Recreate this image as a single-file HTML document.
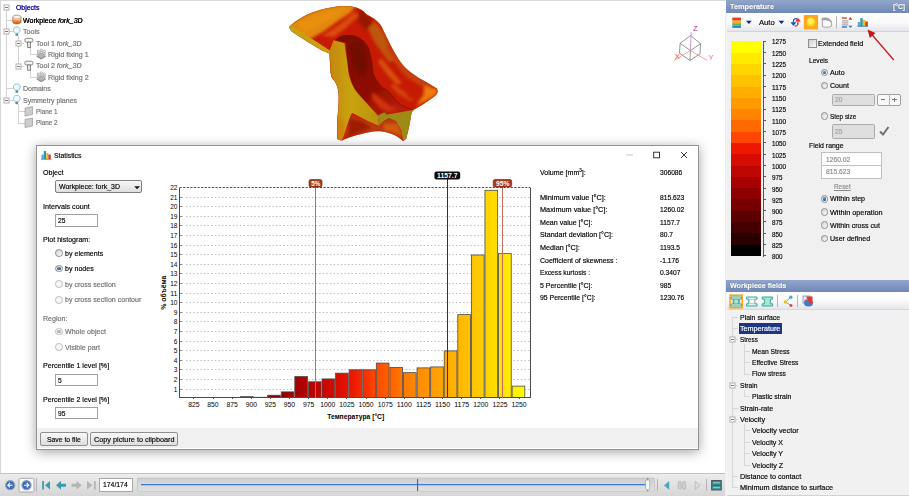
<!DOCTYPE html>
<html><head><meta charset="utf-8"><title>Statistics</title>
<style>
html,body{margin:0;padding:0;}
body{width:909px;height:496px;overflow:hidden;background:#fff;position:relative;font-family:"Liberation Sans","DejaVu Sans",sans-serif;font-size:8px;color:#000;}
.a{position:absolute;white-space:nowrap;}
.t{position:absolute;white-space:nowrap;transform-origin:0 50%;-webkit-text-stroke:.18px;}
.radio{position:absolute;width:5.7px;height:5.7px;border:1px solid #8e8e8e;border-radius:50%;background:linear-gradient(135deg,#cfcfcf,#fff);}
.radio.on::after{content:"";position:absolute;left:1px;top:1px;width:3.7px;height:3.7px;border-radius:50%;background:radial-gradient(circle at 40% 35%,#4aa4f0,#1a4a9c 75%);}
.radio.dis{border-color:#bdbdbd;background:#f6f6f6;}
.radio.dis.on::after{background:#b0b0b0;}
.inp{position:absolute;background:#fff;border:1px solid #a0a0a0;box-sizing:border-box;}
.btn{position:absolute;box-sizing:border-box;border:1px solid #8f8f8f;border-radius:2px;background:linear-gradient(#f8f8f8,#dedede);}
</style></head><body>

<div class="a" style="left:0;top:0;width:726px;height:1px;background:#dadada"></div>
<div class="a" style="left:0;top:0;width:1px;height:474px;background:#d6d6d6"></div>
<svg class="a" style="left:0;top:0" width="120" height="135" viewBox="0 0 120 135">
<g fill="none" stroke="#d2d2d2" stroke-width="1" shape-rendering="crispEdges">
<path d="M6.5 9V100.5 M6.5 20.5h6 M6.5 31.5h6 M6.5 88.5h6 M6.5 100.5h6 M18.5 35.8V66.5 M18.5 43.5h5 M18.5 66.5h5 M30.5 47.2V54.5h6 M30.5 70V77.5h6 M18.5 104.19999999999999V123.5 M18.5 111.5h6 M18.5 123.5h6"/></g>
<g fill="#fff" stroke="#b0b0b0">
<rect x="4" y="5" width="5" height="5"/>
<rect x="4" y="29" width="5" height="5"/>
<rect x="16" y="41" width="5" height="5"/>
<rect x="16" y="64" width="5" height="5"/>
<rect x="4" y="98" width="5" height="5"/>
</g><g stroke="#6a78b0" shape-rendering="crispEdges">
<path d="M5 7.5h3"/>
<path d="M5 31.5h3"/>
<path d="M17 43.5h3"/>
<path d="M17 66.5h3"/>
<path d="M5 100.5h3"/>
</g>
<defs><linearGradient id="wp" x1="0" y1="0" x2="0" y2="1"><stop offset="0" stop-color="#ffffff"/><stop offset=".4" stop-color="#fbd6b8"/><stop offset=".75" stop-color="#ec7a2a"/><stop offset="1" stop-color="#d85808"/></linearGradient></defs>
<path d="M12.8 17c0-2.4 8.2-2.4 8.2 0v5c0 2.5-8.2 2.5-8.2 0z" fill="url(#wp)" stroke="#a85a2a" stroke-width=".7"/><ellipse cx="16.9" cy="17" rx="3.8" ry="1.4" fill="#fff" stroke="#b87a5a" stroke-width=".4"/>
<path d="M15.3 33.3c-3.4-2.6-1.8-6.4 1.5-6.4s4.9 3.8 1.5 6.4z" fill="#eef8fc" stroke="#5ab0c8" stroke-width=".7"/><rect x="15.5" y="33.6" width="2.6" height="2.2" fill="#5a8a9a"/>
<path d="M15.3 90.3c-3.4-2.6-1.8-6.4 1.5-6.4s4.9 3.8 1.5 6.4z" fill="#eef8fc" stroke="#5ab0c8" stroke-width=".7"/><rect x="15.5" y="90.6" width="2.6" height="2.2" fill="#5a8a9a"/>
<path d="M15.3 101.7c-3.4-2.6-1.8-6.4 1.5-6.4s4.9 3.8 1.5 6.4z" fill="#eef8fc" stroke="#5ab0c8" stroke-width=".7"/><rect x="15.5" y="102" width="2.6" height="2.2" fill="#5a8a9a"/>
<rect x="24.8" y="38.4" width="8.2" height="3.8" rx="1.7" fill="#f4f4f4" stroke="#707070" stroke-width=".8"/><rect x="27.6" y="42.2" width="3" height="5.2" fill="#e8e8e8" stroke="#707070" stroke-width=".8"/>
<rect x="24.8" y="61.2" width="8.2" height="3.8" rx="1.7" fill="#f4f4f4" stroke="#707070" stroke-width=".8"/><rect x="27.6" y="65" width="3" height="5.2" fill="#e8e8e8" stroke="#707070" stroke-width=".8"/>
<path d="M36.2 56.4l5-2.6 5 2.6-5 3z" fill="#8c8c8c"/><path d="M36.2 55.2l5-2.6 5 2.6-5 3z" fill="#b4b4b4"/><g fill="#fff" stroke="#7a7a7a" stroke-width=".5"><circle cx="38.3" cy="51.1" r="1.1"/><circle cx="41.3" cy="50.1" r="1.1"/><circle cx="44.3" cy="51.1" r="1.1"/><path d="M37.3 54.1v-1.6h2v1.6zM40.3 53.3v-1.8h2v1.8zM43.3 54.1v-1.6h2v1.6z"/></g>
<path d="M36.2 79.2l5-2.6 5 2.6-5 3z" fill="#8c8c8c"/><path d="M36.2 78l5-2.6 5 2.6-5 3z" fill="#b4b4b4"/><g fill="#fff" stroke="#7a7a7a" stroke-width=".5"><circle cx="38.3" cy="73.9" r="1.1"/><circle cx="41.3" cy="72.9" r="1.1"/><circle cx="44.3" cy="73.9" r="1.1"/><path d="M37.3 76.9v-1.6h2v1.6zM40.3 76.1v-1.8h2v1.8zM43.3 76.9v-1.6h2v1.6z"/></g>
<path d="M25 108.1l7.5-1.5v8l-7.5 1.5z" fill="#cdcdcd" stroke="#8e8e8e" stroke-width=".6"/>
<path d="M25 119.5l7.5-1.5v8l-7.5 1.5z" fill="#cdcdcd" stroke="#8e8e8e" stroke-width=".6"/>
</svg>
<div class="t" style="top:2.7px;font-size:8px;line-height:9px;transform:scaleX(0.863);left:15.7px;color:#2a20a8;text-shadow:0 0 .2px #2a20a8;">Objects</div>
<div class="t" style="top:15.8px;font-size:8px;line-height:9px;transform:scaleX(0.878);left:23.2px;color:#000;text-shadow:0 0 .2px #444;">Workpiece <i>fork_3D</i></div>
<div class="t" style="top:27.2px;font-size:8px;line-height:9px;transform:scaleX(0.894);left:23.2px;color:#707070;">Tools</div>
<div class="t" style="top:38.6px;font-size:8px;line-height:9px;transform:scaleX(0.882);left:35.5px;color:#707070;">Tool 1 <i>fork_3D</i></div>
<div class="t" style="top:50px;font-size:8px;line-height:9px;transform:scaleX(0.888);left:48.3px;color:#707070;">Rigid fixing 1</div>
<div class="t" style="top:61.4px;font-size:8px;line-height:9px;transform:scaleX(0.882);left:35.5px;color:#707070;">Tool 2 <i>fork_3D</i></div>
<div class="t" style="top:72.8px;font-size:8px;line-height:9px;transform:scaleX(0.888);left:48.3px;color:#707070;">Rigid fixing 2</div>
<div class="t" style="top:84.2px;font-size:8px;line-height:9px;transform:scaleX(0.881);left:23.2px;color:#707070;">Domains</div>
<div class="t" style="top:95.6px;font-size:8px;line-height:9px;transform:scaleX(0.874);left:23.2px;color:#707070;">Symmetry planes</div>
<div class="t" style="top:107px;font-size:8px;line-height:9px;transform:scaleX(0.792);left:35.5px;color:#707070;">Plane 1</div>
<div class="t" style="top:118.4px;font-size:8px;line-height:9px;transform:scaleX(0.792);left:35.5px;color:#707070;">Plane 2</div>
<svg class="a" style="left:280px;top:0" width="170" height="146" viewBox="280 0 170 146">
<defs>
<clipPath id="oc"><path d="M289 27C289 27 293.1 22.9 296.5 20.7C299.9 18.5 304.9 15.7 309.1 13.8C313.3 11.9 317.4 10.6 321.6 9.4C325.8 8.2 330.4 7.5 334.2 6.9C338 6.3 340.8 5.9 344.2 5.9C347.6 5.9 351.4 6.2 354.3 6.9C357.2 7.6 359.7 8.8 361.8 10C363.9 11.2 364.7 12.9 366.8 14.4C368.9 15.9 372 17 374.3 18.8C376.6 20.6 378.9 22.8 380.6 25.1C382.3 27.4 382.9 29.7 384.4 32.6C385.9 35.5 387.7 39.4 389.4 42.7C391.1 46.1 392.4 48.9 394.7 52.7C397 56.5 399.7 61.5 403.2 65.4C406.7 69.3 411.7 73 415.9 76C420.1 79 425.1 81.4 428.6 83.4C432.1 85.5 437.1 88.3 437.1 88.3C437.1 88.3 437.7 91.9 437.7 91.9C437.7 91.9 437.2 94.1 435 96.1C432.8 98 427.9 101.3 424.4 103.6C420.9 105.9 413.8 109.9 413.8 109.9C413.8 109.9 412.4 110.6 411.7 113.1C411 115.6 410.5 120.5 409.6 124.7C408.7 128.9 406.4 138.5 406.4 138.5C406.4 138.5 403.2 141.3 403.2 141.3C403.2 141.3 398.2 136.9 394.7 135.3C391.2 133.7 386.2 132 382 131.5C377.8 131 374.2 131.4 369.3 132.2C364.4 133 357 135 352.4 136.4C347.8 137.8 341.8 140.6 341.8 140.6C341.8 140.6 337.5 139.2 337.5 139.2C337.5 139.2 336.9 130.6 337.1 124.7C337.3 118.8 338.4 109.2 338.6 103.6C338.8 97.9 338.7 94.3 338.2 90.8C337.7 87.3 336.6 84.9 335.4 82.4C334.2 79.9 332.1 79.2 331.2 76C330.3 72.8 330.4 67 330.1 63.3C329.8 59.5 329.5 53.5 329.5 53.5C329.5 53.5 325 52 321.6 50.2C318.2 48.4 314.1 45.8 309.1 42.7C304.1 39.6 291.5 31.4 291.5 31.4C291.5 31.4 289 27 289 27Z"/></clipPath>
<filter id="bl" x="-20%" y="-20%" width="140%" height="140%"><feGaussianBlur stdDeviation="1.6"/></filter>
<filter id="bs" x="-20%" y="-20%" width="140%" height="140%"><feGaussianBlur stdDeviation=".7"/></filter>
<linearGradient id="oy" x1="0" y1="0" x2="1" y2="0"><stop offset="0" stop-color="#c4860c"/><stop offset=".45" stop-color="#c8a40e"/><stop offset="1" stop-color="#bc900e"/></linearGradient>
<linearGradient id="ow" gradientUnits="userSpaceOnUse" x1="345" y1="40" x2="395" y2="110"><stop offset="0" stop-color="#7a0c04"/><stop offset=".65" stop-color="#8e0e04"/><stop offset="1" stop-color="#b81c08"/></linearGradient>
</defs>
<g clip-path="url(#oc)">
<rect x="280" y="0" width="170" height="146" fill="#c61a04"/>
<g filter="url(#bl)">
<path d="M286 27L300 17L322 8L345 4L356 6L350 13L338 21L324 31L310 39L296 36Z" fill="#e4880e"/>
<path d="M296 24L322 13L344 8L338 15L316 27L304 32Z" fill="#e8900e"/>
<path d="M322 36L340 24L354 12L360 15L346 28L334 37Z" fill="#da4a0a"/>
<path d="M359 9L368 14L373 24L367 31L358 22Z" fill="#981204"/>
<path d="M368 28L375 21L384 33L390 47L397 60L389 62L380 50L373 40Z" fill="#c0540c"/>
<path d="M388 44L398 58L412 73L432 86L426 89L406 77L394 62L386 48Z" fill="#c8400a"/>
<path d="M381 58L392 71L402 83L397 85L386 73L378 62Z" fill="#d8500e"/>
<path d="M394 84L406 93L418 98L410 101L398 94L390 86Z" fill="#d4420c"/>
<path d="M404 86L420 92L430 90L420 100L408 98Z" fill="#c41a06"/>
<path d="M424 86L438 89L436 95L426 101L416 106L424 95Z" fill="#ec7c10"/>
<path d="M350 116L366 120L379 127L384 120L396 118L404 128L404 142L392 134L380 131L366 132L350 137L345 135Z" fill="#b83c0a"/>
<path d="M349 118L362 121L372 128L360 132L348 137Z" fill="#a01e06"/>
<path d="M384 124L398 124L402 136L392 132L384 131Z" fill="#d05a0e"/>
</g>
<path d="M335.3 40.2C335.3 40.2 338.2 36.9 341 36.1C343.8 35.3 348.8 34.8 352.3 35.3C355.8 35.8 359.2 37.4 361.9 39.4C364.6 41.4 366.8 43.9 368.4 47.4C370 50.9 370.8 56 371.6 60.3C372.4 64.6 371.9 69.2 373.2 73.2C374.5 77.2 377 81.3 379.7 84.5C382.4 87.7 386.2 89.4 389.4 92.6C392.6 95.8 395.3 100.8 399 103.6C402.7 106.4 411.7 109.5 411.7 109.5C411.7 109.5 387.3 114.6 387.3 114.6C387.3 114.6 384.2 112 384.2 112C384.2 112 377.8 115.2 377.8 115.2C377.8 115.2 368.8 105.4 365.1 101.4C361.4 97.4 358.1 95.2 355.5 91C352.9 86.8 351.2 81.6 349.8 76.5C348.4 71.4 348.1 66 347.4 60.3C346.7 54.6 345.8 42.6 345.8 42.6C345.8 42.6 335.3 40.2 335.3 40.2Z" fill="url(#ow)" filter="url(#bs)"/>
<path d="M372 92L380 98L390 106L398 109L388 112L380 108L372 99Z" fill="#d0300a" filter="url(#bl)"/>
<path d="M352 46L360 44L365 56L366 70L361 76L355 66Z" fill="#6e0a04" filter="url(#bl)"/>
<path d="M368.4 47.4C368.9 49.5 370.8 56 371.6 60.3C372.4 64.6 371.9 69.2 373.2 73.2C374.5 77.2 377 81.3 379.7 84.5C382.4 87.7 386.2 89.4 389.4 92.6C392.6 95.8 395.3 100.8 399 103.6C402.7 106.4 409.6 108.5 411.7 109.5" fill="none" stroke="#7a1004" stroke-width="1" opacity=".75" filter="url(#bs)"/>
<path d="M333.6 40.2C333.6 40.2 344.5 43.3 344.5 43.3C344.5 43.3 346.3 55.8 347.1 61.2C347.9 66.7 348 71.4 349.2 76C350.4 80.6 351.9 84.5 354.5 88.7C357.1 92.9 361.2 97 365.1 101.4C369 105.8 377.8 115.2 377.8 115.2C377.8 115.2 378.9 125.8 378.9 125.8C378.9 125.8 369.5 121.5 365.1 119.4C360.7 117.3 352.4 113.1 352.4 113.1C352.4 113.1 351.4 113.6 350.3 116.3C349.2 119 347.4 124.9 346 129C344.6 133.1 341.8 141 341.8 141C341.8 141 337 140 337 140C337 140 336.3 130.8 336.5 124.7C336.7 118.6 337.8 109.2 338 103.6C338.2 97.9 338.1 94.3 337.6 90.8C337.1 87.3 336.2 84.9 335 82.4C333.8 79.9 331.5 79.2 330.6 76C329.7 72.8 329.8 67.2 329.5 63.3C329.2 59.4 328.8 52.7 328.8 52.7C328.8 52.7 333.6 40.2 333.6 40.2Z" fill="url(#oy)" filter="url(#bs)"/>
<path d="M337 118L343 120L345 130L341.8 141L337 140Z" fill="#d8780c" opacity=".7" filter="url(#bl)"/>
<path d="M329.2 53L330 63.3L331 76L335.2 82.4L338 90.8L338.3 103.6L337 124.7L337.3 139" fill="none" stroke="#b83a08" stroke-width=".8" opacity=".8"/>
<path d="M289 26L291.5 25.5L330 50.5L329.5 54.5L321.6 50.2L309.1 42.7L291.5 31.4L288 28Z" fill="#c8a010"/>
<path d="M378.9 125.8L377.8 115.2L384.2 112L387.3 114.6L413.8 109.9L411.7 113.1L409.6 124.7L406.4 138.5L403.2 141.3L401.5 130L396 121L389 118L383.5 121Z" fill="#a08a14" filter="url(#bs)"/>
<path d="M377.8 115.2L384.2 112L387.3 114.6" fill="none" stroke="#7a2a08" stroke-width=".6"/>
<path d="M289 27C289 27 293.1 22.9 296.5 20.7C299.9 18.5 304.9 15.7 309.1 13.8C313.3 11.9 317.4 10.6 321.6 9.4C325.8 8.2 330.4 7.5 334.2 6.9C338 6.3 340.8 5.9 344.2 5.9C347.6 5.9 351.4 6.2 354.3 6.9C357.2 7.6 359.7 8.8 361.8 10C363.9 11.2 364.7 12.9 366.8 14.4C368.9 15.9 372 17 374.3 18.8C376.6 20.6 378.9 22.8 380.6 25.1C382.3 27.4 382.9 29.7 384.4 32.6C385.9 35.5 387.7 39.4 389.4 42.7C391.1 46.1 392.4 48.9 394.7 52.7C397 56.5 399.7 61.5 403.2 65.4C406.7 69.3 411.7 73 415.9 76C420.1 79 425.1 81.4 428.6 83.4C432.1 85.5 437.1 88.3 437.1 88.3C437.1 88.3 437.7 91.9 437.7 91.9C437.7 91.9 437.2 94.1 435 96.1C432.8 98 427.9 101.3 424.4 103.6C420.9 105.9 413.8 109.9 413.8 109.9" fill="none" stroke="#a07010" stroke-width="1.2" opacity=".5"/>
</g>
</svg>

<svg class="a" style="left:664px;top:15px" width="60" height="55" viewBox="664 15 60 55">
<g fill="none" stroke="#6a6a6a" stroke-width=".7"><path d="M690.6 35.5L680.1 43.3L690.4 50.5L700.6 43.8ZM680.1 43.3L679.5 53.2L690 60.5L700 53.8L700.6 43.8M690.4 50.5L690 60.5"/></g>
<g fill="none" stroke-width=".8"><path d="M690.4 50.5L691.2 32.2" stroke="#c07ac8"/><path d="M690.4 50.5L674 60.5" stroke="#f08a8a"/><path d="M690.4 50.5L707.2 60.5" stroke="#f08a8a"/></g>
<g font-size="7.5" font-family="Liberation Sans, sans-serif" text-anchor="middle"><text x="695.2" y="31" fill="#a030a8">Z</text><text x="677.3" y="59.3" fill="#f04a4a">X</text><text x="711.1" y="59.6" fill="#f06a6a">Y</text></g>
</svg>
<div class="a" style="left:0;top:473.4px;width:726px;height:23px;background:linear-gradient(#ececec,#d6d6d6);border-top:1px solid #c2c2c2;box-sizing:border-box"></div>
<svg class="a" style="left:0;top:474px" width="727" height="22" viewBox="0 474 727 22">
<circle cx="10.2" cy="485.2" r="4.6" fill="#3a6cc4" stroke="#98a0ac" stroke-width="1.1"/><path d="M12.6 485.2h-4.6m2-2.2l-2.2 2.2 2.2 2.2" stroke="#fff" stroke-width="1.1" fill="none"/>
<rect x="19" y="478.3" width="15" height="13.7" rx="1.5" fill="#f4f6fa" stroke="#9a9a9a" stroke-width=".8"/>
<circle cx="26.5" cy="485.2" r="4.6" fill="#3a6cc4" stroke="#98a0ac" stroke-width="1.1"/><path d="M24.1 485.2h4.6m-2-2.2l2.2 2.2-2.2 2.2" stroke="#fff" stroke-width="1.1" fill="none"/>
<path d="M36.5 478v14" stroke="#b4b4b4"/>
<g fill="#3a9cb4"><path d="M42.2 481v8.5h1.8v-8.5z M50 481l-5 4.2 5 4.3z"/><path d="M56 485.2l5-4.5v3h5v3h-5v3z"/></g>
<g fill="#b4b4b4"><path d="M81.5 485.2l-5-4.5v3h-5v3h5v3z"/><path d="M95.7 481v8.5h-1.8v-8.5z M87 481l5.5 4.2-5.5 4.3z"/></g>
<rect x="99.5" y="478.5" width="33" height="13" fill="#fff" stroke="#a8a8a8"/>
<defs><linearGradient id="trk" x1="0" y1="0" x2="0" y2="1"><stop offset="0" stop-color="#cfcfcf"/><stop offset="1" stop-color="#e2e2e2"/></linearGradient></defs>
<rect x="137.5" y="478" width="517" height="13.4" rx="1" fill="url(#trk)" stroke="#c4c4c4" stroke-width=".8"/>
<path d="M141 484.7h505" stroke="#3f7ad8" stroke-width="1.3"/>
<path d="M417.6 479v12" stroke="#3a50c8" stroke-width="1"/>
<path d="M647.7 478.2v13" stroke="#3a50d8" stroke-width=".9" stroke-dasharray="1.4 1"/>
<rect x="645.6" y="480" width="4.2" height="9.8" rx="1.2" fill="#f8f8f8" stroke="#9a9a9a" stroke-width=".7"/>
<path d="M657.5 478.8v12" stroke="#b4b4b4"/>
<path d="M669.2 481v8.8l-5.2-4.4z" fill="#4aa6c0"/>
<g fill="#d0d0d0" stroke="#a8a8a8" stroke-width=".6"><rect x="678.2" y="481.6" width="2.9" height="7.4" rx=".8"/><rect x="682.7" y="481.6" width="2.9" height="7.4" rx=".8"/><path d="M695.2 481.4v8l5-4z" fill="#dcdcdc"/></g>
<path d="M706.5 478.8v12" stroke="#b4b4b4"/>
<rect x="711.7" y="480.6" width="9.5" height="9.3" fill="#3a9aa0" stroke="#484e50" stroke-width="1.1"/><path d="M712.5 485.2h8" stroke="#484e50" stroke-width="1"/><path d="M713 482.8h7M713 487.6h7" stroke="#8ad8d8" stroke-width=".9"/>
</svg>
<div class="t" style="top:480.3px;font-size:8px;line-height:9px;transform:scaleX(0.854);left:103.3px;">174/174</div>
<div class="a" style="left:725px;top:13px;width:1px;height:483px;background:#ececec;"></div>
<div class="a" style="left:726px;top:0;width:183px;height:496px;background:#f0f0f0;border-left:1px solid #f5f5f5;box-sizing:border-box"></div>
<div class="a" style="left:726px;top:0;width:183px;height:12.5px;background:linear-gradient(#92a6cb,#6f88b8);"></div>
<div class="t" style="top:1.9px;font-size:8px;line-height:9px;transform:scaleX(0.919);left:730.4px;font-weight:bold;color:#fff;text-shadow:0 0 1px #345;">Temperature</div>
<div class="t" style="top:1.9px;font-size:8px;line-height:9px;transform:scaleX(0.839);left:892.9px;font-weight:bold;color:#fff;text-shadow:0 0 1px #345;">[°C]</div>
<div class="a" style="left:727px;top:12.5px;width:182px;height:19px;background:linear-gradient(#ffffff,#fafafa 50%,#e4e6ea);border-bottom:1px solid #d4d4d4;box-sizing:border-box"></div>
<svg class="a" style="left:727px;top:13px" width="182" height="50" viewBox="727 13 182 50">
<rect x="732.3" y="17.6" width="8.7" height="3" fill="#e83a2a"/><rect x="732.3" y="20.6" width="8.7" height="2.6" fill="#f0b020"/><rect x="732.3" y="23.2" width="8.7" height="2.3" fill="#58b868"/><rect x="732.3" y="25.5" width="8.7" height="2.4" fill="#3a80c8"/>
<path d="M746 20.7h5.8l-2.9 3.2z" fill="#14288a"/>
<path d="M778.5 20.7h5.8l-2.9 3.2z" fill="#14288a"/>
<g fill="none" stroke-width="1.3"><path d="M797 18.6C793.6 18.4 793.3 20.5 793.4 22.6" stroke="#1a56b8"/><path d="M794.6 26.2C798 26.4 798 24 798 21.2" stroke="#e03420"/></g>
<path d="M790.4 22.3h6l-3 3.7z" fill="#1a56b8"/><path d="M795.1 21.5h5.8l-2.9-3.7z" fill="#e03420"/>
<rect x="803.8" y="15" width="14.3" height="14.4" fill="#ffa620"/><circle cx="810.8" cy="22" r="5.3" fill="#f8b018"/><circle cx="810.8" cy="21.9" r="4.3" fill="#ffd820"/><circle cx="810.6" cy="21.3" r="2.7" fill="#fff264"/>
<path d="M822 18.5C826 16.8 831.6 19 831.6 23V26C829 27.6 825 27.6 822.5 26.5Z" fill="#fbfbfb" stroke="#8e8e8e" stroke-width=".8"/><path d="M822 18.5C826 16.8 831.6 19 831.6 23C829.5 20.5 826 19.6 822 20.6Z" fill="#a0a0a0"/>
<path d="M836.5 16.3v12" stroke="#b4b4b4"/>
<g stroke="#8c8c8c" stroke-width=".9"><path d="M841.9 18h5" stroke="#d02818" stroke-width="1.2"/><path d="M841.9 20.9h6.5M841.9 22.9h6.5M841.9 24.9h6.5"/><path d="M841.9 27h5" stroke="#1a58c0" stroke-width="1.2"/></g>
<path d="M848.5 19.7l1.9-2.6 1.9 2.6z" fill="#d83828"/><path d="M848.5 25.7l1.9 2.3 1.9-2.3z" fill="#2868c8"/>
<rect x="857.8" y="22" width="2.5" height="4" fill="#58a8e0"/><rect x="860.3" y="18.2" width="2.5" height="8" fill="#2a9aa8"/><rect x="862.8" y="20" width="2.5" height="6" fill="#e8c020"/><rect x="865.3" y="21.5" width="2.5" height="4.5" fill="#d83020"/><path d="M857.4 26.3h10.6" stroke="#2a68a8" stroke-width=".8"/>
<path d="M870.5 33L893.8 60" stroke="#c8141c" stroke-width="1.2"/><path d="M867.5 29.6l8 3.5-5.7 5z" fill="#c8141c"/>
</svg>
<div class="t" style="top:18px;font-size:8px;line-height:9px;transform:scaleX(0.954);left:759.3px;">Auto</div>
<div class="a" style="left:731.3px;top:41.4px;width:30px;height:11.58px;background:#ffff00"></div>
<div class="a" style="left:731.3px;top:52.68px;width:30px;height:11.58px;background:#ffea00"></div>
<div class="a" style="left:731.3px;top:63.97px;width:30px;height:11.58px;background:#ffd600"></div>
<div class="a" style="left:731.3px;top:75.25px;width:30px;height:11.58px;background:#ffc200"></div>
<div class="a" style="left:731.3px;top:86.54px;width:30px;height:11.58px;background:#ffae00"></div>
<div class="a" style="left:731.3px;top:97.82px;width:30px;height:11.58px;background:#ff9a00"></div>
<div class="a" style="left:731.3px;top:109.11px;width:30px;height:11.58px;background:#ff8400"></div>
<div class="a" style="left:731.3px;top:120.39px;width:30px;height:11.58px;background:#ff6a00"></div>
<div class="a" style="left:731.3px;top:131.67px;width:30px;height:11.58px;background:#ff4600"></div>
<div class="a" style="left:731.3px;top:142.96px;width:30px;height:11.58px;background:#ee1800"></div>
<div class="a" style="left:731.3px;top:154.24px;width:30px;height:11.58px;background:#d60c00"></div>
<div class="a" style="left:731.3px;top:165.53px;width:30px;height:11.58px;background:#be0600"></div>
<div class="a" style="left:731.3px;top:176.81px;width:30px;height:11.58px;background:#a60200"></div>
<div class="a" style="left:731.3px;top:188.09px;width:30px;height:11.58px;background:#8e0000"></div>
<div class="a" style="left:731.3px;top:199.38px;width:30px;height:11.58px;background:#760000"></div>
<div class="a" style="left:731.3px;top:210.66px;width:30px;height:11.58px;background:#5c0000"></div>
<div class="a" style="left:731.3px;top:221.95px;width:30px;height:11.58px;background:#440000"></div>
<div class="a" style="left:731.3px;top:233.23px;width:30px;height:11.58px;background:#280000"></div>
<div class="a" style="left:731.3px;top:244.52px;width:30px;height:11.58px;background:#000000"></div>
<div class="a" style="left:763px;top:41px;width:1px;height:215.5px;background:#555"></div>
<div class="a" style="left:763px;top:40.9px;width:2.5px;height:1px;background:#555"></div>
<div class="t" style="top:37.4px;font-size:8px;line-height:9px;transform:scaleX(0.787);left:771.7px;">1275</div>
<div class="a" style="left:763px;top:52.18px;width:2.5px;height:1px;background:#555"></div>
<div class="t" style="top:48.72px;font-size:8px;line-height:9px;transform:scaleX(0.787);left:771.7px;">1250</div>
<div class="a" style="left:763px;top:63.47px;width:2.5px;height:1px;background:#555"></div>
<div class="t" style="top:60.03px;font-size:8px;line-height:9px;transform:scaleX(0.787);left:771.7px;">1225</div>
<div class="a" style="left:763px;top:74.75px;width:2.5px;height:1px;background:#555"></div>
<div class="t" style="top:71.35px;font-size:8px;line-height:9px;transform:scaleX(0.787);left:771.7px;">1200</div>
<div class="a" style="left:763px;top:86.04px;width:2.5px;height:1px;background:#555"></div>
<div class="t" style="top:82.66px;font-size:8px;line-height:9px;transform:scaleX(0.814);left:771.7px;">1175</div>
<div class="a" style="left:763px;top:97.32px;width:2.5px;height:1px;background:#555"></div>
<div class="t" style="top:93.98px;font-size:8px;line-height:9px;transform:scaleX(0.814);left:771.7px;">1150</div>
<div class="a" style="left:763px;top:108.61px;width:2.5px;height:1px;background:#555"></div>
<div class="t" style="top:105.29px;font-size:8px;line-height:9px;transform:scaleX(0.814);left:771.7px;">1125</div>
<div class="a" style="left:763px;top:119.89px;width:2.5px;height:1px;background:#555"></div>
<div class="t" style="top:116.61px;font-size:8px;line-height:9px;transform:scaleX(0.814);left:771.7px;">1100</div>
<div class="a" style="left:763px;top:131.17px;width:2.5px;height:1px;background:#555"></div>
<div class="t" style="top:127.93px;font-size:8px;line-height:9px;transform:scaleX(0.787);left:771.7px;">1075</div>
<div class="a" style="left:763px;top:142.46px;width:2.5px;height:1px;background:#555"></div>
<div class="t" style="top:139.24px;font-size:8px;line-height:9px;transform:scaleX(0.787);left:771.7px;">1050</div>
<div class="a" style="left:763px;top:153.74px;width:2.5px;height:1px;background:#555"></div>
<div class="t" style="top:150.56px;font-size:8px;line-height:9px;transform:scaleX(0.787);left:771.7px;">1025</div>
<div class="a" style="left:763px;top:165.03px;width:2.5px;height:1px;background:#555"></div>
<div class="t" style="top:161.87px;font-size:8px;line-height:9px;transform:scaleX(0.787);left:771.7px;">1000</div>
<div class="a" style="left:763px;top:176.31px;width:2.5px;height:1px;background:#555"></div>
<div class="t" style="top:173.19px;font-size:8px;line-height:9px;transform:scaleX(0.787);left:771.7px;">975</div>
<div class="a" style="left:763px;top:187.59px;width:2.5px;height:1px;background:#555"></div>
<div class="t" style="top:184.51px;font-size:8px;line-height:9px;transform:scaleX(0.787);left:771.7px;">950</div>
<div class="a" style="left:763px;top:198.88px;width:2.5px;height:1px;background:#555"></div>
<div class="t" style="top:195.82px;font-size:8px;line-height:9px;transform:scaleX(0.787);left:771.7px;">925</div>
<div class="a" style="left:763px;top:210.16px;width:2.5px;height:1px;background:#555"></div>
<div class="t" style="top:207.14px;font-size:8px;line-height:9px;transform:scaleX(0.787);left:771.7px;">900</div>
<div class="a" style="left:763px;top:221.45px;width:2.5px;height:1px;background:#555"></div>
<div class="t" style="top:218.45px;font-size:8px;line-height:9px;transform:scaleX(0.787);left:771.7px;">875</div>
<div class="a" style="left:763px;top:232.73px;width:2.5px;height:1px;background:#555"></div>
<div class="t" style="top:229.77px;font-size:8px;line-height:9px;transform:scaleX(0.787);left:771.7px;">850</div>
<div class="a" style="left:763px;top:244.02px;width:2.5px;height:1px;background:#555"></div>
<div class="t" style="top:241.08px;font-size:8px;line-height:9px;transform:scaleX(0.787);left:771.7px;">825</div>
<div class="a" style="left:763px;top:255.3px;width:2.5px;height:1px;background:#555"></div>
<div class="t" style="top:252.4px;font-size:8px;line-height:9px;transform:scaleX(0.787);left:771.7px;">800</div>
<div class="a" style="left:808.2px;top:39.2px;width:6.4px;height:6.4px;border:1px solid #8e8e8e;background:linear-gradient(135deg,#cfcfcf,#fafafa)"></div>
<div class="t" style="top:38.7px;font-size:8px;line-height:9px;transform:scaleX(0.891);left:817.6px;">Extended field</div>
<div class="t" style="top:56.1px;font-size:8px;line-height:9px;transform:scaleX(0.826);left:808.8px;">Levels</div>
<div class="radio on" style="left:820.5px;top:68.75px"></div>
<div class="t" style="top:68px;font-size:8px;line-height:9px;transform:scaleX(0.885);left:829.6px;">Auto</div>
<div class="radio" style="left:820.5px;top:81.65px"></div>
<div class="t" style="top:80.9px;font-size:8px;line-height:9px;transform:scaleX(0.885);left:829.6px;">Count</div>
<div class="inp" style="left:832px;top:93.6px;width:43px;height:12.2px;background:#dedede;border-color:#ababab;border-radius:1.5px"></div>
<div class="t" style="top:95.4px;font-size:8px;line-height:9px;transform:scaleX(0.835);left:834.5px;color:#a0a0a0">20</div>
<div class="btn" style="left:876.8px;top:93.6px;width:24px;height:12.2px;background:#f8f8f8;border-color:#a0a0a0"></div><div class="a" style="left:888.5px;top:94px;width:1px;height:11.5px;background:#b0b0b0"></div>
<div class="a" style="left:880.5px;top:99.3px;width:4.5px;height:1px;background:#777"></div><div class="a" style="left:892px;top:99.3px;width:4.6px;height:1px;background:#777"></div><div class="a" style="left:893.8px;top:97.5px;width:1px;height:4.6px;background:#777"></div>
<div class="radio" style="left:820.5px;top:112.45px"></div>
<div class="t" style="top:111.7px;font-size:8px;line-height:9px;transform:scaleX(0.799);left:829.6px;">Step size</div>
<div class="inp" style="left:832px;top:124.2px;width:43px;height:14.4px;background:#dedede;border-color:#ababab;border-radius:1.5px"></div>
<div class="t" style="top:126.9px;font-size:8px;line-height:9px;transform:scaleX(0.835);left:834.5px;color:#a0a0a0">25</div>
<svg class="a" style="left:878px;top:125px" width="14" height="12"><path d="M2 6.5l3 3 5.5-7.5" stroke="#707070" stroke-width="2" fill="none"/></svg>
<div class="t" style="top:140.9px;font-size:8px;line-height:9px;transform:scaleX(0.862);left:808.8px;">Field range</div>
<div class="inp" style="left:820.5px;top:152.2px;width:61.5px;height:13.7px;border-color:#c0c0c0"></div>
<div class="inp" style="left:820.5px;top:165.3px;width:61.5px;height:13.3px;border-color:#c0c0c0"></div>
<div class="t" style="top:154.8px;font-size:8px;line-height:9px;transform:scaleX(0.835);left:825.5px;color:#8a8a8a">1260.02</div>
<div class="t" style="top:167.4px;font-size:8px;line-height:9px;transform:scaleX(0.835);left:825.5px;color:#8a8a8a">815.623</div>
<div class="t" style="top:181.5px;font-size:8px;line-height:9px;transform:scaleX(0.799);left:833.9px;color:#8a8a8a;text-decoration:underline">Reset</div>
<div class="radio on" style="left:820.5px;top:195.15px"></div>
<div class="t" style="top:194.4px;font-size:8px;line-height:9px;transform:scaleX(0.885);left:830.3px;">Within step</div>
<div class="radio" style="left:820.5px;top:208.3px"></div>
<div class="t" style="top:207.55px;font-size:8px;line-height:9px;transform:scaleX(0.91);left:830.3px;">Within operation</div>
<div class="radio" style="left:820.5px;top:221.45px"></div>
<div class="t" style="top:220.7px;font-size:8px;line-height:9px;transform:scaleX(0.885);left:830.3px;">Within cross cut</div>
<div class="radio" style="left:820.5px;top:234.6px"></div>
<div class="t" style="top:233.85px;font-size:8px;line-height:9px;transform:scaleX(0.885);left:830.3px;">User defined</div>
<div class="a" style="left:726px;top:279.8px;width:183px;height:12.2px;background:linear-gradient(#92a6cb,#6f88b8);"></div>
<div class="t" style="top:281.4px;font-size:8px;line-height:9px;transform:scaleX(0.887);left:730px;font-weight:bold;color:#fff;text-shadow:0 0 1px #345;">Workpiece fields</div>
<div class="a" style="left:727px;top:292px;width:182px;height:18px;background:linear-gradient(#ffffff,#fafafa 50%,#e4e6ea);border-bottom:1px solid #d8d8d8;box-sizing:border-box"></div>
<svg class="a" style="left:727px;top:292px" width="100" height="18" viewBox="727 292 100 18">
<rect x="730" y="295.2" width="12.2" height="12.6" fill="#fff2d4" stroke="#ffa21e" stroke-width="1.6"/>
<g fill="#d8f4ee" stroke="#3aa89a" stroke-width="1">
<path d="M731 297h10.4v2h-2.2v5h2.2v2h-10.4v-2h2.2v-5h-2.2z" fill="#fff8e8"/><rect x="733.7" y="299" width="5" height="5" fill="#a8e4d8"/>
<path d="M746.6 297h10.4v2.2h-2.2v4.6h2.2v2.2h-10.4v-2.2h2.2v-4.6h-2.2z"/><rect x="749.3" y="299.5" width="5" height="4" fill="#f4f4f4" stroke="#b8b8b8" stroke-width=".6"/>
<path d="M762.2 297h10.4v2.2h-2.2v4.6h2.2v2.2h-10.4v-2.2h2.2v-4.6h-2.2z" fill="#a8e4d8"/>
</g>
<path d="M777.5 295v12M797.5 295v12" stroke="#b8b8b8"/>
<path d="M785.5 302l5-4.5M785.5 302l5.5 3.5" stroke="#5a9ac0" stroke-width=".9"/><circle cx="785.3" cy="302" r="1.7" fill="#f0c020"/><circle cx="790.8" cy="297.3" r="1.7" fill="#4ab0c0"/><circle cx="791" cy="305.5" r="1.5" fill="#e04a3a"/>
<rect x="803" y="296" width="7" height="7" fill="#eef2fa" stroke="#6a88c0" stroke-width=".8"/><ellipse cx="808.5" cy="303" rx="4.5" ry="3.5" fill="#4a78c0"/><path d="M806 296.5h6.5v7h-3z" fill="#e03a2a"/><path d="M804 301l3-2 3-2" stroke="#e03a2a" stroke-width=".7" fill="none"/>
</svg>
<div class="a" style="left:727px;top:310px;width:182px;height:186px;background:#f1f1f1;"></div>
<svg class="a" style="left:727px;top:310px" width="40" height="186" viewBox="727 310 40 186"><g stroke="#d6d6d6" fill="none" shape-rendering="crispEdges">
<path d="M732.5 317v171"/>
<path d="M732.5 317.5h5"/>
<path d="M732.5 328.5h5"/>
<path d="M732.5 339.5h5"/>
<path d="M744.5 351.5h5.5"/>
<path d="M744.5 362.5h5.5"/>
<path d="M744.5 374.5h5.5"/>
<path d="M732.5 385.5h5"/>
<path d="M744.5 396.5h5.5"/>
<path d="M732.5 408.5h5"/>
<path d="M732.5 419.5h5"/>
<path d="M744.5 430.5h5.5"/>
<path d="M744.5 442.5h5.5"/>
<path d="M744.5 453.5h5.5"/>
<path d="M744.5 465.5h5.5"/>
<path d="M732.5 476.5h5"/>
<path d="M732.5 487.5h5"/>
<path d="M744.5 343.5V374.5 M744.5 389.5V396.5 M744.5 423.5V465.5"/>
<rect x="730" y="337" width="5" height="5" fill="#fff" stroke="#b0b0b0" shape-rendering="auto"/><path d="M731 339.5h3" stroke="#6a78b0"/>
<rect x="730" y="383" width="5" height="5" fill="#fff" stroke="#b0b0b0" shape-rendering="auto"/><path d="M731 385.5h3" stroke="#6a78b0"/>
<rect x="730" y="417" width="5" height="5" fill="#fff" stroke="#b0b0b0" shape-rendering="auto"/><path d="M731 419.5h3" stroke="#6a78b0"/>
</g></svg>
<div class="t" style="top:312.5px;font-size:8px;line-height:9px;transform:scaleX(0.869);left:739.8px;">Plain surface</div>
<div class="a" style="left:738.5px;top:323px;width:43px;height:11px;background:#1c3684"></div>
<div class="t" style="top:323.88px;font-size:8px;line-height:9px;transform:scaleX(0.897);left:739.8px;color:#fff">Temperature</div>
<div class="t" style="top:335.27px;font-size:8px;line-height:9px;transform:scaleX(0.785);left:739.8px;">Stress</div>
<div class="t" style="top:346.65px;font-size:8px;line-height:9px;transform:scaleX(0.837);left:751.8px;">Mean Stress</div>
<div class="t" style="top:358.04px;font-size:8px;line-height:9px;transform:scaleX(0.837);left:751.8px;">Effective Stress</div>
<div class="t" style="top:369.43px;font-size:8px;line-height:9px;transform:scaleX(0.838);left:751.8px;">Flow stress</div>
<div class="t" style="top:380.81px;font-size:8px;line-height:9px;transform:scaleX(0.837);left:739.8px;">Strain</div>
<div class="t" style="top:392.19px;font-size:8px;line-height:9px;transform:scaleX(0.867);left:751.8px;">Plastic strain</div>
<div class="t" style="top:403.58px;font-size:8px;line-height:9px;transform:scaleX(0.889);left:739.8px;">Strain-rate</div>
<div class="t" style="top:414.97px;font-size:8px;line-height:9px;transform:scaleX(0.907);left:739.8px;">Velocity</div>
<div class="t" style="top:426.35px;font-size:8px;line-height:9px;transform:scaleX(0.905);left:751.8px;">Velocity vector</div>
<div class="t" style="top:437.74px;font-size:8px;line-height:9px;transform:scaleX(0.885);left:751.8px;">Velocity X</div>
<div class="t" style="top:449.12px;font-size:8px;line-height:9px;transform:scaleX(0.889);left:751.8px;">Velocity Y</div>
<div class="t" style="top:460.5px;font-size:8px;line-height:9px;transform:scaleX(0.897);left:751.8px;">Velocity Z</div>
<div class="t" style="top:471.89px;font-size:8px;line-height:9px;transform:scaleX(0.899);left:739.8px;">Distance to contact</div>
<div class="t" style="top:483.27px;font-size:8px;line-height:9px;transform:scaleX(0.915);left:739.8px;">Minimum distance to surface</div>
<div class="a" style="left:727px;top:495px;width:182px;height:1px;background:#d2d2d2"></div>
<div class="a" style="left:36px;top:145px;width:662.5px;height:304.5px;background:#fff;border:1px solid #949494;box-sizing:border-box;box-shadow:0 2px 11px rgba(0,0,0,.36)"></div>
<div class="a" style="left:37px;top:428.3px;width:660.5px;height:20.2px;background:#f0f0f0"></div>
<svg class="a" style="left:41px;top:150px" width="12" height="10"><rect x="0.5" y="4.5" width="2.3" height="4.5" fill="#58a8e0"/><rect x="2.8" y="1" width="2.3" height="8" fill="#2a9aa8"/><rect x="5.1" y="3" width="2.3" height="6" fill="#e8c020"/><rect x="7.4" y="4.5" width="2.3" height="4.5" fill="#d83020"/><path d="M0 9.3h10.5" stroke="#2a68a8" stroke-width=".7"/></svg>
<div class="t" style="top:150.6px;font-size:8px;line-height:9px;transform:scaleX(0.859);left:54.2px;">Statistics</div>
<svg class="a" style="left:620px;top:148px" width="75" height="14"><path d="M6 7h7" stroke="#c8c8c8"/><rect x="33.7" y="4.2" width="5.8" height="5.6" fill="none" stroke="#222" stroke-width=".9"/><path d="M61 4l6 6M67 4l-6 6" stroke="#222" stroke-width=".9"/></svg>
<div class="t" style="top:168px;font-size:8px;line-height:9px;transform:scaleX(0.885);left:43px;">Object</div>
<div class="t" style="top:201.5px;font-size:8px;line-height:9px;transform:scaleX(0.897);left:43px;">Intervals count</div>
<div class="t" style="top:235.4px;font-size:8px;line-height:9px;transform:scaleX(0.885);left:43px;">Plot histogram:</div>
<div class="t" style="top:313.7px;font-size:8px;line-height:9px;transform:scaleX(0.885);left:43px;color:#707070;">Region:</div>
<div class="t" style="top:361.3px;font-size:8px;line-height:9px;transform:scaleX(0.885);left:43px;">Percentile 1 level [%]</div>
<div class="t" style="top:394.6px;font-size:8px;line-height:9px;transform:scaleX(0.885);left:43px;">Percentile 2 level [%]</div>
<div class="btn" style="left:55.3px;top:180.4px;width:86.6px;height:12.4px;border-color:#808080"></div>
<div class="t" style="top:182.4px;font-size:8px;line-height:9px;transform:scaleX(0.87);left:59px;">Workpiece: fork_3D</div>
<svg class="a" style="left:134px;top:185.5px" width="8" height="5"><path d="M0.2 0.2h5.8l-2.9 3z" fill="#111"/></svg>
<div class="inp" style="left:55.2px;top:214.2px;width:42.5px;height:12.6px"></div>
<div class="t" style="top:216px;font-size:8px;line-height:9px;transform:scaleX(0.835);left:57.5px;">25</div>
<div class="radio" style="left:54.9px;top:249.35px"></div>
<div class="t" style="top:248.6px;font-size:8px;line-height:9px;transform:scaleX(0.885);left:64.8px;">by elements</div>
<div class="radio on" style="left:54.9px;top:264.55px"></div>
<div class="t" style="top:263.8px;font-size:8px;line-height:9px;transform:scaleX(0.885);left:64.8px;">by nodes</div>
<div class="radio dis" style="left:54.9px;top:280.35px"></div>
<div class="t" style="top:279.6px;font-size:8px;line-height:9px;transform:scaleX(0.885);left:64.8px;color:#707070;">by cross section</div>
<div class="radio dis" style="left:54.9px;top:296.15px"></div>
<div class="t" style="top:295.4px;font-size:8px;line-height:9px;transform:scaleX(0.885);left:64.8px;color:#707070;">by cross section contour</div>
<div class="radio on dis" style="left:54.9px;top:327.75px"></div>
<div class="t" style="top:327px;font-size:8px;line-height:9px;transform:scaleX(0.885);left:64.8px;color:#707070;">Whole object</div>
<div class="radio dis" style="left:54.9px;top:343.45px"></div>
<div class="t" style="top:342.7px;font-size:8px;line-height:9px;transform:scaleX(0.885);left:64.8px;color:#707070;">Visible part</div>
<div class="inp" style="left:55.2px;top:373.9px;width:42.5px;height:12.2px"></div>
<div class="t" style="top:375.6px;font-size:8px;line-height:9px;transform:scaleX(0.835);left:57.5px;">5</div>
<div class="inp" style="left:55.2px;top:407.3px;width:42.5px;height:12.2px"></div>
<div class="t" style="top:409px;font-size:8px;line-height:9px;transform:scaleX(0.835);left:57.5px;">95</div>
<div class="btn" style="left:40px;top:432.2px;width:47.5px;height:13.6px"></div>
<div class="t" style="top:434.7px;font-size:8px;line-height:9px;transform:scaleX(0.851);left:46.8px;">Save to file</div>
<div class="btn" style="left:90.2px;top:432.2px;width:87.5px;height:13.6px"></div>
<div class="t" style="top:434.7px;font-size:8px;line-height:9px;transform:scaleX(0.91);left:94px;">Copy picture to clipboard</div>
<svg class="a" style="left:150px;top:165px" width="390" height="262" viewBox="150 165 390 262" font-family="Liberation Sans, sans-serif" font-size="8">
<path d="M186 389.5H530.5" stroke="#bdbdbd" stroke-dasharray="1.4 2.2"/>
<path d="M179.5 389.5h3" stroke="#8a8a8a"/>
<text x="177.4" y="392.3" text-anchor="end" textLength="3.6" lengthAdjust="spacingAndGlyphs" >1</text>
<path d="M186 379.5H530.5" stroke="#bdbdbd" stroke-dasharray="1.4 2.2"/>
<path d="M179.5 379.5h3" stroke="#8a8a8a"/>
<text x="177.4" y="382.3" text-anchor="end" textLength="3.6" lengthAdjust="spacingAndGlyphs" >2</text>
<path d="M186 369.5H530.5" stroke="#bdbdbd" stroke-dasharray="1.4 2.2"/>
<path d="M179.5 369.5h3" stroke="#8a8a8a"/>
<text x="177.4" y="372.3" text-anchor="end" textLength="3.6" lengthAdjust="spacingAndGlyphs" >3</text>
<path d="M186 360.5H530.5" stroke="#bdbdbd" stroke-dasharray="1.4 2.2"/>
<path d="M179.5 360.5h3" stroke="#8a8a8a"/>
<text x="177.4" y="363.3" text-anchor="end" textLength="3.6" lengthAdjust="spacingAndGlyphs" >4</text>
<path d="M186 350.5H530.5" stroke="#bdbdbd" stroke-dasharray="1.4 2.2"/>
<path d="M179.5 350.5h3" stroke="#8a8a8a"/>
<text x="177.4" y="353.3" text-anchor="end" textLength="3.6" lengthAdjust="spacingAndGlyphs" >5</text>
<path d="M186 341.5H530.5" stroke="#bdbdbd" stroke-dasharray="1.4 2.2"/>
<path d="M179.5 341.5h3" stroke="#8a8a8a"/>
<text x="177.4" y="344.3" text-anchor="end" textLength="3.6" lengthAdjust="spacingAndGlyphs" >6</text>
<path d="M186 331.5H530.5" stroke="#bdbdbd" stroke-dasharray="1.4 2.2"/>
<path d="M179.5 331.5h3" stroke="#8a8a8a"/>
<text x="177.4" y="334.3" text-anchor="end" textLength="3.6" lengthAdjust="spacingAndGlyphs" >7</text>
<path d="M186 321.5H530.5" stroke="#bdbdbd" stroke-dasharray="1.4 2.2"/>
<path d="M179.5 321.5h3" stroke="#8a8a8a"/>
<text x="177.4" y="324.3" text-anchor="end" textLength="3.6" lengthAdjust="spacingAndGlyphs" >8</text>
<path d="M186 312.5H530.5" stroke="#bdbdbd" stroke-dasharray="1.4 2.2"/>
<path d="M179.5 312.5h3" stroke="#8a8a8a"/>
<text x="177.4" y="315.3" text-anchor="end" textLength="3.6" lengthAdjust="spacingAndGlyphs" >9</text>
<path d="M186 302.5H530.5" stroke="#bdbdbd" stroke-dasharray="1.4 2.2"/>
<path d="M179.5 302.5h3" stroke="#8a8a8a"/>
<text x="177.4" y="305.3" text-anchor="end" textLength="7.2" lengthAdjust="spacingAndGlyphs" >10</text>
<path d="M186 293.5H530.5" stroke="#bdbdbd" stroke-dasharray="1.4 2.2"/>
<path d="M179.5 293.5h3" stroke="#8a8a8a"/>
<text x="177.4" y="296.3" text-anchor="end" textLength="7.2" lengthAdjust="spacingAndGlyphs" >11</text>
<path d="M186 283.5H530.5" stroke="#bdbdbd" stroke-dasharray="1.4 2.2"/>
<path d="M179.5 283.5h3" stroke="#8a8a8a"/>
<text x="177.4" y="286.3" text-anchor="end" textLength="7.2" lengthAdjust="spacingAndGlyphs" >12</text>
<path d="M186 273.5H530.5" stroke="#bdbdbd" stroke-dasharray="1.4 2.2"/>
<path d="M179.5 273.5h3" stroke="#8a8a8a"/>
<text x="177.4" y="276.3" text-anchor="end" textLength="7.2" lengthAdjust="spacingAndGlyphs" >13</text>
<path d="M186 264.5H530.5" stroke="#bdbdbd" stroke-dasharray="1.4 2.2"/>
<path d="M179.5 264.5h3" stroke="#8a8a8a"/>
<text x="177.4" y="267.3" text-anchor="end" textLength="7.2" lengthAdjust="spacingAndGlyphs" >14</text>
<path d="M186 254.5H530.5" stroke="#bdbdbd" stroke-dasharray="1.4 2.2"/>
<path d="M179.5 254.5h3" stroke="#8a8a8a"/>
<text x="177.4" y="257.3" text-anchor="end" textLength="7.2" lengthAdjust="spacingAndGlyphs" >15</text>
<path d="M186 245.5H530.5" stroke="#bdbdbd" stroke-dasharray="1.4 2.2"/>
<path d="M179.5 245.5h3" stroke="#8a8a8a"/>
<text x="177.4" y="248.3" text-anchor="end" textLength="7.2" lengthAdjust="spacingAndGlyphs" >16</text>
<path d="M186 235.5H530.5" stroke="#bdbdbd" stroke-dasharray="1.4 2.2"/>
<path d="M179.5 235.5h3" stroke="#8a8a8a"/>
<text x="177.4" y="238.3" text-anchor="end" textLength="7.2" lengthAdjust="spacingAndGlyphs" >17</text>
<path d="M186 225.5H530.5" stroke="#bdbdbd" stroke-dasharray="1.4 2.2"/>
<path d="M179.5 225.5h3" stroke="#8a8a8a"/>
<text x="177.4" y="228.3" text-anchor="end" textLength="7.2" lengthAdjust="spacingAndGlyphs" >18</text>
<path d="M186 216.5H530.5" stroke="#bdbdbd" stroke-dasharray="1.4 2.2"/>
<path d="M179.5 216.5h3" stroke="#8a8a8a"/>
<text x="177.4" y="219.3" text-anchor="end" textLength="7.2" lengthAdjust="spacingAndGlyphs" >19</text>
<path d="M186 206.5H530.5" stroke="#bdbdbd" stroke-dasharray="1.4 2.2"/>
<path d="M179.5 206.5h3" stroke="#8a8a8a"/>
<text x="177.4" y="209.3" text-anchor="end" textLength="7.2" lengthAdjust="spacingAndGlyphs" >20</text>
<path d="M186 197.5H530.5" stroke="#bdbdbd" stroke-dasharray="1.4 2.2"/>
<path d="M179.5 197.5h3" stroke="#8a8a8a"/>
<text x="177.4" y="200.3" text-anchor="end" textLength="7.2" lengthAdjust="spacingAndGlyphs" >21</text>
<text x="177.4" y="190.3" text-anchor="end" textLength="7.2" lengthAdjust="spacingAndGlyphs" >22</text>
<path d="M179.5 187.5H530.5" stroke="#3a3a3a" stroke-width=".9" stroke-dasharray="2.2 1.4"/>
<defs>
<linearGradient id="b0"><stop offset="0" stop-color="#050000"/><stop offset="1" stop-color="#210000"/></linearGradient>
<linearGradient id="b1"><stop offset="0" stop-color="#210000"/><stop offset="1" stop-color="#370000"/></linearGradient>
<linearGradient id="b2"><stop offset="0" stop-color="#370000"/><stop offset="1" stop-color="#4a0000"/></linearGradient>
<linearGradient id="b3"><stop offset="0" stop-color="#4a0000"/><stop offset="1" stop-color="#5b0000"/></linearGradient>
<linearGradient id="b4"><stop offset="0" stop-color="#5b0000"/><stop offset="1" stop-color="#6e0000"/></linearGradient>
<linearGradient id="b5"><stop offset="0" stop-color="#6e0000"/><stop offset="1" stop-color="#7f0000"/></linearGradient>
<linearGradient id="b6"><stop offset="0" stop-color="#7f0000"/><stop offset="1" stop-color="#900000"/></linearGradient>
<linearGradient id="b7"><stop offset="0" stop-color="#900000"/><stop offset="1" stop-color="#a20200"/></linearGradient>
<linearGradient id="b8"><stop offset="0" stop-color="#a20200"/><stop offset="1" stop-color="#b30400"/></linearGradient>
<linearGradient id="b9"><stop offset="0" stop-color="#b30400"/><stop offset="1" stop-color="#c40700"/></linearGradient>
<linearGradient id="b10"><stop offset="0" stop-color="#c40700"/><stop offset="1" stop-color="#d50c00"/></linearGradient>
<linearGradient id="b11"><stop offset="0" stop-color="#d50c00"/><stop offset="1" stop-color="#e61400"/></linearGradient>
<linearGradient id="b12"><stop offset="0" stop-color="#e61400"/><stop offset="1" stop-color="#f42900"/></linearGradient>
<linearGradient id="b13"><stop offset="0" stop-color="#f42900"/><stop offset="1" stop-color="#ff4900"/></linearGradient>
<linearGradient id="b14"><stop offset="0" stop-color="#ff4900"/><stop offset="1" stop-color="#ff6200"/></linearGradient>
<linearGradient id="b15"><stop offset="0" stop-color="#ff6200"/><stop offset="1" stop-color="#ff7700"/></linearGradient>
<linearGradient id="b16"><stop offset="0" stop-color="#ff7700"/><stop offset="1" stop-color="#ff8900"/></linearGradient>
<linearGradient id="b17"><stop offset="0" stop-color="#ff8900"/><stop offset="1" stop-color="#ff9800"/></linearGradient>
<linearGradient id="b18"><stop offset="0" stop-color="#ff9800"/><stop offset="1" stop-color="#ffa700"/></linearGradient>
<linearGradient id="b19"><stop offset="0" stop-color="#ffa700"/><stop offset="1" stop-color="#ffb500"/></linearGradient>
<linearGradient id="b20"><stop offset="0" stop-color="#ffb500"/><stop offset="1" stop-color="#ffc300"/></linearGradient>
<linearGradient id="b21"><stop offset="0" stop-color="#ffc300"/><stop offset="1" stop-color="#ffd100"/></linearGradient>
<linearGradient id="b22"><stop offset="0" stop-color="#ffd100"/><stop offset="1" stop-color="#ffe000"/></linearGradient>
<linearGradient id="b23"><stop offset="0" stop-color="#ffe000"/><stop offset="1" stop-color="#ffee00"/></linearGradient>
<linearGradient id="b24"><stop offset="0" stop-color="#ffee00"/><stop offset="1" stop-color="#fffd00"/></linearGradient>
</defs>
<rect x="213.36" y="398.41" width="12.68" height="-0.91" fill="url(#b2)" stroke="#4a4a4a" stroke-width=".8"/>
<rect x="226.94" y="397.64" width="12.68" height="-0.14" fill="url(#b3)" stroke="#4a4a4a" stroke-width=".8"/>
<rect x="240.52" y="396.68" width="12.68" height="0.82" fill="url(#b4)" stroke="#4a4a4a" stroke-width=".8"/>
<rect x="254.1" y="397.26" width="12.68" height="0.24" fill="url(#b5)" stroke="#4a4a4a" stroke-width=".8"/>
<rect x="267.68" y="395.24" width="12.68" height="2.26" fill="url(#b6)" stroke="#4a4a4a" stroke-width=".8"/>
<rect x="281.26" y="391.88" width="12.68" height="5.62" fill="url(#b7)" stroke="#4a4a4a" stroke-width=".8"/>
<rect x="294.84" y="376.52" width="12.68" height="20.98" fill="url(#b8)" stroke="#4a4a4a" stroke-width=".8"/>
<rect x="308.42" y="381.8" width="12.68" height="15.7" fill="url(#b9)" stroke="#4a4a4a" stroke-width=".8"/>
<rect x="322" y="378.92" width="12.68" height="18.58" fill="url(#b10)" stroke="#4a4a4a" stroke-width=".8"/>
<rect x="335.58" y="373.16" width="12.68" height="24.34" fill="url(#b11)" stroke="#4a4a4a" stroke-width=".8"/>
<rect x="349.16" y="369.8" width="12.68" height="27.7" fill="url(#b12)" stroke="#4a4a4a" stroke-width=".8"/>
<rect x="362.74" y="369.8" width="12.68" height="27.7" fill="url(#b13)" stroke="#4a4a4a" stroke-width=".8"/>
<rect x="376.32" y="363.08" width="12.68" height="34.42" fill="url(#b14)" stroke="#4a4a4a" stroke-width=".8"/>
<rect x="389.9" y="367.4" width="12.68" height="30.1" fill="url(#b15)" stroke="#4a4a4a" stroke-width=".8"/>
<rect x="403.48" y="372.68" width="12.68" height="24.82" fill="url(#b16)" stroke="#4a4a4a" stroke-width=".8"/>
<rect x="417.06" y="367.88" width="12.68" height="29.62" fill="url(#b17)" stroke="#4a4a4a" stroke-width=".8"/>
<rect x="430.64" y="366.92" width="12.68" height="30.58" fill="url(#b18)" stroke="#4a4a4a" stroke-width=".8"/>
<rect x="444.22" y="350.89" width="12.68" height="46.61" fill="url(#b19)" stroke="#4a4a4a" stroke-width=".8"/>
<rect x="457.8" y="314.6" width="12.68" height="82.9" fill="url(#b20)" stroke="#4a4a4a" stroke-width=".8"/>
<rect x="471.38" y="254.98" width="12.68" height="142.52" fill="url(#b21)" stroke="#4a4a4a" stroke-width=".8"/>
<rect x="484.96" y="190.28" width="12.68" height="207.22" fill="url(#b22)" stroke="#4a4a4a" stroke-width=".8"/>
<rect x="498.54" y="253.64" width="12.68" height="143.86" fill="url(#b23)" stroke="#4a4a4a" stroke-width=".8"/>
<rect x="512.12" y="386.12" width="12.68" height="11.38" fill="url(#b24)" stroke="#4a4a4a" stroke-width=".8"/>
<path d="M179.5 187.5V397.5H530.5V187.5" fill="none" stroke="#4a4a4a" shape-rendering="crispEdges"/>
<path d="M193.5 397.5v1.5" stroke="#555" shape-rendering="crispEdges"/>
<text x="193.9" y="406.9" text-anchor="middle" textLength="11.3" lengthAdjust="spacingAndGlyphs" >825</text>
<path d="M213.5 397.5v1.5" stroke="#555" shape-rendering="crispEdges"/>
<text x="213" y="406.9" text-anchor="middle" textLength="11.3" lengthAdjust="spacingAndGlyphs" >850</text>
<path d="M232.5 397.5v1.5" stroke="#555" shape-rendering="crispEdges"/>
<text x="232.2" y="406.9" text-anchor="middle" textLength="11.3" lengthAdjust="spacingAndGlyphs" >875</text>
<path d="M251.5 397.5v1.5" stroke="#555" shape-rendering="crispEdges"/>
<text x="251.3" y="406.9" text-anchor="middle" textLength="11.3" lengthAdjust="spacingAndGlyphs" >900</text>
<path d="M270.5 397.5v1.5" stroke="#555" shape-rendering="crispEdges"/>
<text x="270.4" y="406.9" text-anchor="middle" textLength="11.3" lengthAdjust="spacingAndGlyphs" >925</text>
<path d="M289.5 397.5v1.5" stroke="#555" shape-rendering="crispEdges"/>
<text x="289.5" y="406.9" text-anchor="middle" textLength="11.3" lengthAdjust="spacingAndGlyphs" >950</text>
<path d="M308.5 397.5v1.5" stroke="#555" shape-rendering="crispEdges"/>
<text x="308.7" y="406.9" text-anchor="middle" textLength="11.3" lengthAdjust="spacingAndGlyphs" >975</text>
<path d="M327.5 397.5v1.5" stroke="#555" shape-rendering="crispEdges"/>
<text x="327.8" y="406.9" text-anchor="middle" textLength="15.1" lengthAdjust="spacingAndGlyphs" >1000</text>
<path d="M346.5 397.5v1.5" stroke="#555" shape-rendering="crispEdges"/>
<text x="346.9" y="406.9" text-anchor="middle" textLength="15.1" lengthAdjust="spacingAndGlyphs" >1025</text>
<path d="M366.5 397.5v1.5" stroke="#555" shape-rendering="crispEdges"/>
<text x="366.1" y="406.9" text-anchor="middle" textLength="15.1" lengthAdjust="spacingAndGlyphs" >1050</text>
<path d="M385.5 397.5v1.5" stroke="#555" shape-rendering="crispEdges"/>
<text x="385.2" y="406.9" text-anchor="middle" textLength="15.1" lengthAdjust="spacingAndGlyphs" >1075</text>
<path d="M404.5 397.5v1.5" stroke="#555" shape-rendering="crispEdges"/>
<text x="404.3" y="406.9" text-anchor="middle" textLength="15.1" lengthAdjust="spacingAndGlyphs" >1100</text>
<path d="M423.5 397.5v1.5" stroke="#555" shape-rendering="crispEdges"/>
<text x="423.5" y="406.9" text-anchor="middle" textLength="15.1" lengthAdjust="spacingAndGlyphs" >1125</text>
<path d="M442.5 397.5v1.5" stroke="#555" shape-rendering="crispEdges"/>
<text x="442.6" y="406.9" text-anchor="middle" textLength="15.1" lengthAdjust="spacingAndGlyphs" >1150</text>
<path d="M461.5 397.5v1.5" stroke="#555" shape-rendering="crispEdges"/>
<text x="461.7" y="406.9" text-anchor="middle" textLength="15.1" lengthAdjust="spacingAndGlyphs" >1175</text>
<path d="M480.5 397.5v1.5" stroke="#555" shape-rendering="crispEdges"/>
<text x="480.8" y="406.9" text-anchor="middle" textLength="15.1" lengthAdjust="spacingAndGlyphs" >1200</text>
<path d="M499.5 397.5v1.5" stroke="#555" shape-rendering="crispEdges"/>
<text x="500" y="406.9" text-anchor="middle" textLength="15.1" lengthAdjust="spacingAndGlyphs" >1225</text>
<path d="M519.5 397.5v1.5" stroke="#555" shape-rendering="crispEdges"/>
<text x="519.1" y="406.9" text-anchor="middle" textLength="15.1" lengthAdjust="spacingAndGlyphs" >1250</text>
<text x="355.7" y="418.6" text-anchor="middle" textLength="57" lengthAdjust="spacingAndGlyphs" font-weight="bold">Температура [°C]</text>
<g transform="translate(165.5,292.7) rotate(-90)">
<text x="0" y="0" text-anchor="middle" textLength="34" lengthAdjust="spacingAndGlyphs" font-weight="bold">% объёма</text>
</g>
<path d="M315.5 187V397.5" stroke="#c46a5a" shape-rendering="crispEdges"/>
<path d="M502.5 187V397.5" stroke="#c46a5a" shape-rendering="crispEdges"/>
<path d="M447.5 178V397.5" stroke="#333" shape-rendering="crispEdges"/>
<rect x="309" y="179.5" width="13" height="7.5" rx="1.8" fill="#a83c1c" stroke="#6a1a0a" stroke-width=".6"/>
<text x="315.8" y="186" text-anchor="middle" textLength="9" lengthAdjust="spacingAndGlyphs" fill="#fff" font-weight="bold" font-size="7">5%</text>
<rect x="493.2" y="179.5" width="18.5" height="7.5" rx="1.8" fill="#a83c1c" stroke="#6a1a0a" stroke-width=".6"/>
<text x="502.8" y="186" text-anchor="middle" textLength="13.5" lengthAdjust="spacingAndGlyphs" fill="#fff" font-weight="bold" font-size="7">95%</text>
<rect x="434.4" y="171.5" width="25.8" height="8" rx="2.2" fill="#0c0c0c"/>
<text x="447.3" y="178.2" text-anchor="middle" textLength="20.5" lengthAdjust="spacingAndGlyphs" fill="#fff" font-weight="bold" font-size="7.5">1157.7</text>
</svg>
<div class="t" style="top:168px;font-size:8px;line-height:9px;transform:scaleX(0.885);left:540.3px;">Volume [mm<span style="font-size:5px;vertical-align:3px;line-height:0">3</span>]:</div>
<div class="t" style="top:168px;font-size:8px;line-height:9px;transform:scaleX(0.835);left:660.3px;">306086</div>
<div class="t" style="top:192.6px;font-size:8px;line-height:9px;transform:scaleX(0.918);left:540.3px;">Minimum value [°C]:</div>
<div class="t" style="top:192.6px;font-size:8px;line-height:9px;transform:scaleX(0.835);left:660.3px;">815.623</div>
<div class="t" style="top:205.2px;font-size:8px;line-height:9px;transform:scaleX(0.913);left:540.3px;">Maximum value [°C]:</div>
<div class="t" style="top:205.2px;font-size:8px;line-height:9px;transform:scaleX(0.835);left:660.3px;">1260.02</div>
<div class="t" style="top:217.8px;font-size:8px;line-height:9px;transform:scaleX(0.886);left:540.3px;">Mean value [°C]:</div>
<div class="t" style="top:217.8px;font-size:8px;line-height:9px;transform:scaleX(0.835);left:660.3px;">1157.7</div>
<div class="t" style="top:230.4px;font-size:8px;line-height:9px;transform:scaleX(0.886);left:540.3px;">Standart deviation [°C]:</div>
<div class="t" style="top:230.4px;font-size:8px;line-height:9px;transform:scaleX(0.835);left:660.3px;">80.7</div>
<div class="t" style="top:243px;font-size:8px;line-height:9px;transform:scaleX(0.902);left:540.3px;">Median [°C]:</div>
<div class="t" style="top:243px;font-size:8px;line-height:9px;transform:scaleX(0.835);left:660.3px;">1193.5</div>
<div class="t" style="top:255.6px;font-size:8px;line-height:9px;transform:scaleX(0.877);left:540.3px;">Coefficient of skewness :</div>
<div class="t" style="top:255.6px;font-size:8px;line-height:9px;transform:scaleX(0.835);left:660.3px;">-1.176</div>
<div class="t" style="top:268.2px;font-size:8px;line-height:9px;transform:scaleX(0.833);left:540.3px;">Excess kurtosis :</div>
<div class="t" style="top:268.2px;font-size:8px;line-height:9px;transform:scaleX(0.835);left:660.3px;">0.3407</div>
<div class="t" style="top:280.8px;font-size:8px;line-height:9px;transform:scaleX(0.873);left:540.3px;">5 Percentile [°C]:</div>
<div class="t" style="top:280.8px;font-size:8px;line-height:9px;transform:scaleX(0.835);left:660.3px;">985</div>
<div class="t" style="top:293.4px;font-size:8px;line-height:9px;transform:scaleX(0.859);left:540.3px;">95 Percentile [°C]:</div>
<div class="t" style="top:293.4px;font-size:8px;line-height:9px;transform:scaleX(0.835);left:660.3px;">1230.76</div>
</body></html>
